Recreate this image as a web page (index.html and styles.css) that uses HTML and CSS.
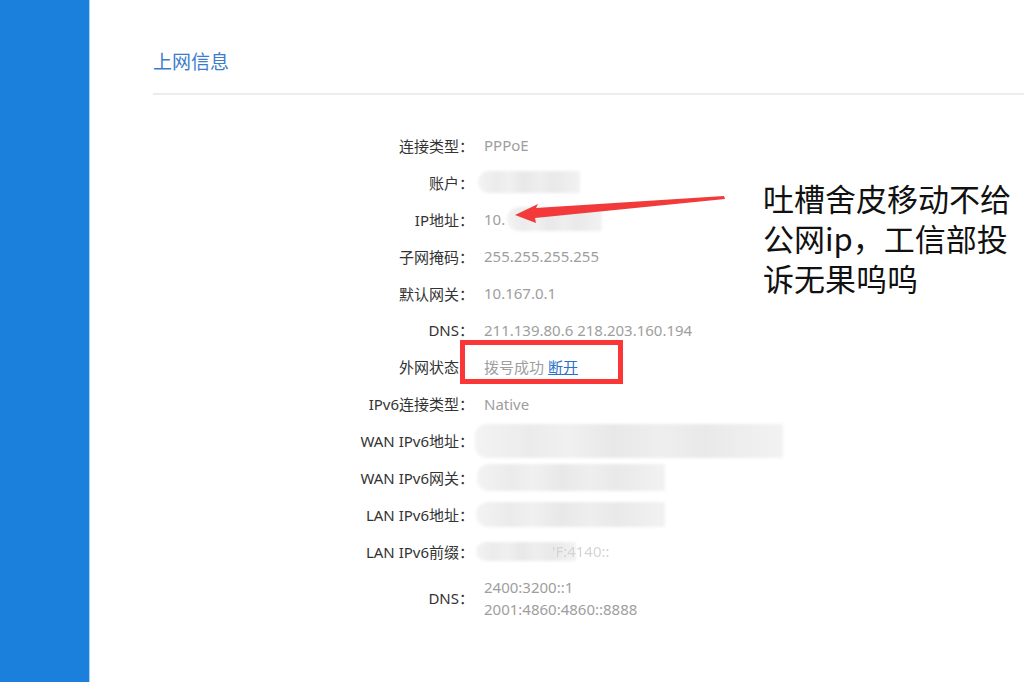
FILE: index.html
```html
<!DOCTYPE html>
<html lang="zh-CN">
<head>
<meta charset="utf-8">
<title>上网信息</title>
<link rel="stylesheet" href="styles.css">
</head>
<body>
<div class="page">
  <aside class="sidebar"></aside>
  <main class="main">
    <h1 class="title">上网信息</h1>
    <div class="divider"></div>
    <div class="form">
      <div class="label">连接类型：</div><div class="value">PPPoE</div>
      <div class="label">账户：</div><div class="value"><span class="blur b-account"></span></div>
      <div class="label">IP地址：</div><div class="value">10.<span class="blur b-ip"></span></div>
      <div class="label">子网掩码：</div><div class="value">255.255.255.255</div>
      <div class="label">默认网关：</div><div class="value">10.167.0.1</div>
      <div class="label">DNS：</div><div class="value">211.139.80.6 218.203.160.194</div>
      <div class="label">外网状态：</div><div class="value">拨号成功 <a class="link" href="#">断开</a></div>
      <div class="label">IPv6连接类型：</div><div class="value">Native</div>
      <div class="label">WAN IPv6地址：</div><div class="value"><span class="blur b-wan"></span></div>
      <div class="label">WAN IPv6网关：</div><div class="value"><span class="blur b-gw"></span></div>
      <div class="label">LAN IPv6地址：</div><div class="value"><span class="blur b-lan"></span></div>
      <div class="label">LAN IPv6前缀：</div><div class="value"><span class="blur b-prefix"></span><span class="faint">'F:4140::</span></div>
      <div class="label">DNS：</div><div class="value multi">2400:3200::1<br>2001:4860:4860::8888</div>
    </div>
  </main>
  <div class="redbox"></div>
  <svg class="arrow" width="1024" height="682" viewBox="0 0 1024 682">
    <polygon points="724,196 536,208 538,204 515,215 536,223 535,218 725,199" fill="#f23a3a"/>
  </svg>
  <div class="note">
    <div class="note-line">吐槽舍皮移动不给</div>
    <div class="note-line">公网ip，工信部投</div>
    <div class="note-line">诉无果呜呜</div>
  </div>
</div>
</body>
</html>
```
FILE: styles.css
```css
html, body {
  margin: 0;
  padding: 0;
  background: #fff;
}
.page {
  position: relative;
  display: flex;
  width: 1024px;
  height: 682px;
  overflow: hidden;
  font-family: "Noto Sans", "Noto Sans CJK SC", sans-serif;
}
.sidebar {
  width: 89px;
  flex: none;
  background: #1a80dc;
  border-right: 1px solid #a9d1f5;
}
.main {
  flex: 1;
  padding-left: 63px;
}
.title {
  margin: 0;
  padding-top: 49px;
  font-size: 19px;
  line-height: 24px;
  font-weight: normal;
  color: #3d7ccc;
  font-family: "Noto Sans CJK SC", sans-serif;
}
.divider {
  margin-top: 20px;
  height: 2px;
  background: #ececec;
}
.form {
  margin-top: 32px;
  display: grid;
  grid-template-columns: 321px 1fr;
  column-gap: 10px;
  font-size: 15px;
}
.label, .value {
  min-height: 36.9px;
  display: flex;
  align-items: center;
}
.label {
  justify-content: flex-end;
  color: #333;
}
.value {
  color: #9e9e9e;
}
.value.multi {
  display: block;
  line-height: 22px;
  padding: 6px 0 6px;
}
.link {
  color: #2b6fd0;
  text-decoration: underline;
  margin-left: 4px;
}
.blur {
  display: inline-block;
  height: 24px;
  border-radius: 12px 0 0 12px;
  background: linear-gradient(90deg, #f3f3f3 0%, #ebebeb 18%, #f0f0f0 30%, #e8e8e8 45%, #eeeeee 60%, #e9e9e9 75%, #f2f2f2 100%);
  filter: blur(1.5px);
}
.b-account { width: 102px; height: 22px; margin-left: -6px; }
.b-ip { width: 95px; height: 24px; margin-left: 2px; }
.b-wan { width: 308px; height: 34px; margin-left: -9px; }
.b-gw { width: 188px; height: 27px; margin-left: -7px; }
.b-lan { width: 189px; height: 25px; margin-left: -8px; }
.b-prefix { width: 100px; height: 19px; margin-left: -8px; }
.faint {
  color: #d4d4d4;
  margin-left: -24px;
  filter: blur(0.6px);
}
.redbox {
  position: absolute;
  left: 460px;
  top: 340px;
  width: 153px;
  height: 34px;
  border: 5px solid #fb3636;
}
.arrow {
  position: absolute;
  left: 0;
  top: 0;
}
.note {
  position: absolute;
  left: 763px;
  top: 180px;
  font-family: "Noto Sans CJK SC", sans-serif;
  font-size: 31px;
  color: #111;
}
.note-line {
  height: 40px;
  line-height: 36px;
}
```
